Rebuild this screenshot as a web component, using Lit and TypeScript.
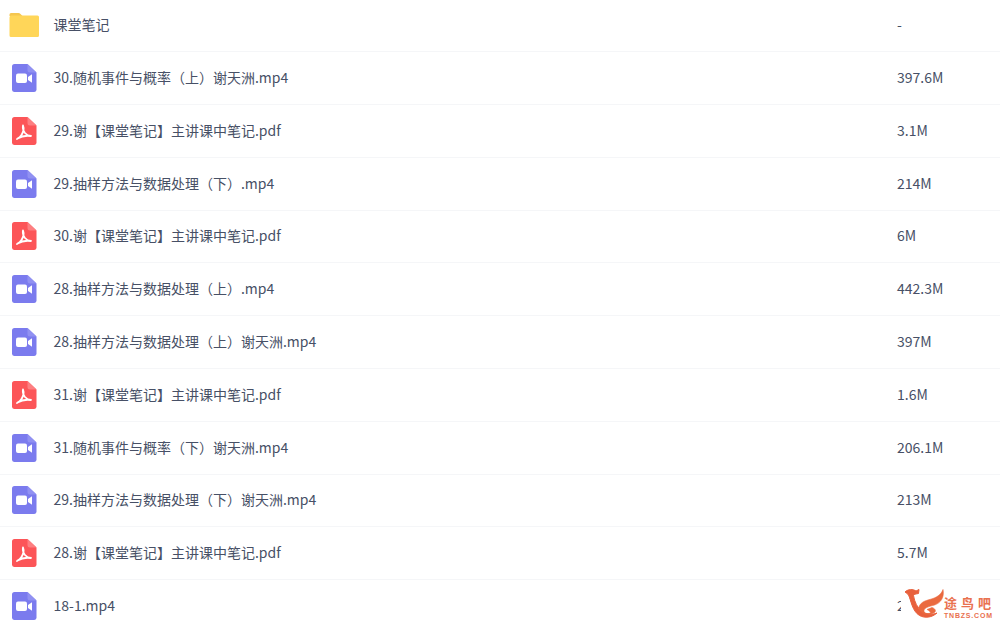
import { LitElement, html, css, svg } from "lit";
import { customElement } from "lit/decorators.js";

type Kind = "folder" | "video" | "pdf";
const rows: [Kind, string, string][] = [
  ["folder", "课堂笔记", "-"],
  ["video", "30.随机事件与概率（上）谢天洲.mp4", "397.6M"],
  ["pdf", "29.谢【课堂笔记】主讲课中笔记.pdf", "3.1M"],
  ["video", "29.抽样方法与数据处理（下）.mp4", "214M"],
  ["pdf", "30.谢【课堂笔记】主讲课中笔记.pdf", "6M"],
  ["video", "28.抽样方法与数据处理（上）.mp4", "442.3M"],
  ["video", "28.抽样方法与数据处理（上）谢天洲.mp4", "397M"],
  ["pdf", "31.谢【课堂笔记】主讲课中笔记.pdf", "1.6M"],
  ["video", "31.随机事件与概率（下）谢天洲.mp4", "206.1M"],
  ["video", "29.抽样方法与数据处理（下）谢天洲.mp4", "213M"],
  ["pdf", "28.谢【课堂笔记】主讲课中笔记.pdf", "5.7M"],
  ["video", "18-1.mp4", "2"],
];

const icons = {
  folder: svg`<svg class="ic" viewBox="0 0 32 32" width="32" height="32"><path d="M1.500 6.500A1.500 1.500 0 0 1 3 5h7.500c.8 0 1.400.3 2 .9L14.500 8H1.500z" fill="#f5c64f"/><path d="M1.500 9.500A2 2 0 0 1 3.500 7.500h26a1.500 1.500 0 0 1 1.500 1.500v18.500a1.500 1.500 0 0 1-1.500 1.500H3a1.500 1.500 0 0 1-1.500-1.500z" fill="#ffd659"/></svg>`,
  video: svg`<svg class="ic doc" viewBox="0 0 32 32" width="32" height="32"><path d="M6.500 2h13L28.500 10.500v17.500a2.500 2.500 0 0 1-2.500 2H6.500A2.500 2.500 0 0 1 4 28V4.500A2.500 2.500 0 0 1 6.500 2z" fill="#7b7bee"/><path d="M19.500 2 28.500 10.500h-6.500a2.500 2.500 0 0 1-2.500-2.500z" fill="#9191f2"/><rect x="8" y="11.500" width="11" height="9.500" rx="2" fill="#fff"/><path d="M20 15l4-2.800v8.600L20 18z" fill="#fff"/></svg>`,
  pdf: svg`<svg class="ic doc" viewBox="0 0 32 32" width="32" height="32"><path d="M6.500 2h13L28.500 10.500v17.500a2.500 2.500 0 0 1-2.500 2H6.500A2.500 2.500 0 0 1 4 28V4.500A2.500 2.500 0 0 1 6.500 2z" fill="#fc5558"/><path d="M19.500 2 28.500 10.500h-6.500a2.500 2.500 0 0 1-2.500-2.500z" fill="#fd7f81"/><path d="M15 10.500c-.8 3 .5 5.500 2 7.500 1.500 1.800 3.500 2.800 6 3M15 10.500c1 2.500.3 6.500-1.500 9.500-1 1.800-2.500 3-4.500 4M9.500 23.500c3-1.800 8.500-3.200 13.500-2.500" fill="none" stroke="#fff" stroke-width="1.800" stroke-linecap="round" stroke-linejoin="round"/></svg>`,
};

@customElement("app-root")
export class AppRoot extends LitElement {
  static styles = css`
    :host {
      display: block;
      position: relative;
      height: 623px;
      overflow: hidden;
      background: #fff;
      font-family: "Noto Sans CJK SC", "Open Sans", sans-serif;
      font-size: 14px;
      color: #475066;
    }
    .list { margin-top: -0.5px; }
    .row {
      height: 52.8px;
      box-sizing: border-box;
      border-bottom: 1px solid #f5f6f8;
      padding-bottom: 2.4px;
      display: flex;
      align-items: center;
      padding-left: 8px;
    }
    .ic { flex: none; display: block; }
    .doc { margin-top: 2px; }
    .name {
      margin-left: 13.500px;
      width: 843.500px;
      flex: none;
      white-space: nowrap;
    }
    .size { white-space: nowrap; }
    .row:last-child { border-bottom: none; }
    .mark {
      position: absolute;
      left: 901px;
      top: 585px;
      width: 99px;
      height: 38px;
      background: #fff;
      display: flex;
      align-items: flex-start;
    }
    .mark svg { flex: none; display: block; margin: 3px 0 0 3px; }
    .brand {
      display: flex;
      flex-direction: column;
      margin-top: 11px;
      color: #e9714f;
      line-height: 1;
    }
    .cn { font-size: 13px; letter-spacing: 4px; font-weight: 700; height: 16px; }
    .en { font-size: 7px; font-family: "Liberation Sans", sans-serif; font-weight: 700; letter-spacing: .8px; }
  `;

  render() {
    return html`
      <div class="list">
        ${rows.map(
          ([k, n, s]) => html`<div class="row">
            ${icons[k]}
            <div class="name">${n}</div>
            <div class="size">${s}</div>
          </div>`
        )}
      </div>
      <div class="mark">
        <svg width="40" height="32" viewBox="0 0 40 32">
          <path d="M1 4C4 1 9 1 12 3L15 1.500 14.500 5.500C12 6 10.500 6 9.500 7.500 10.500 14 13.500 20 18 23.500 22 26.500 28 27 33 25 28 29.500 21 30.500 15.500 27.500 8 23 7 12 4.500 7 3.500 5.500 2 5 1 4z" fill="#e8603c" stroke="#e8603c" stroke-width="1"/>
          <path d="M15 19C17 13 23 12.500 29 10.500 34.500 8.500 37.500 5.500 39 1.500 40.500 9 37 15 30.500 17 25 18.500 20.500 19.500 20 22.500 19.500 25.500 24 26.500 27 24.500 25.500 23.500 24.500 22 23 21.500L28 19.500C31 20.500 32 22.500 31 24 28 26.500 22 27.500 18.500 24.500 15.500 22.500 14.500 21 15 19z" fill="#ea6a3f" stroke="#ea6a3f" stroke-width=".6"/>
        </svg>
        <div class="brand"><span class="cn">途鸟吧</span><span class="en">TNBZS.COM</span></div>
      </div>
    `;
  }
}
